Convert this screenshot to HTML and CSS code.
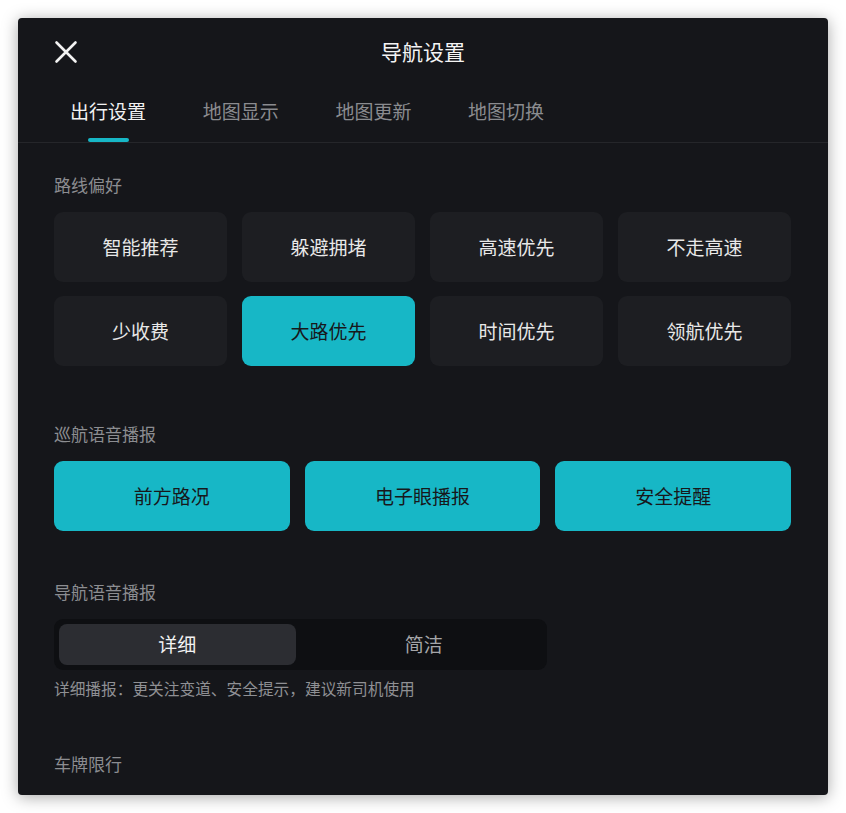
FILE: index.html
```html
<!DOCTYPE html>
<html lang="zh-CN">
<head>
    <meta charset="UTF-8">
    <meta name="viewport" content="width=device-width, initial-scale=1.0">
    <title>导航设置</title>
    <link rel="stylesheet" href="styles.css">
</head>
<body>
    <div class="panel">
        <div class="header">
            <button class="close" aria-label="关闭">
                <svg width="24" height="24" viewBox="0 0 24 24">
                    <path d="M2.5 2.5 L21.5 21.5 M21.5 2.5 L2.5 21.5" stroke="#f2f2f2" stroke-width="2.6" stroke-linecap="round" fill="none"/>
                </svg>
            </button>
            <h1 class="title">导航设置</h1>
            <span></span>
        </div>

        <div class="tabs">
            <div class="tab active"><span>出行设置</span><i class="tab-bar"></i></div>
            <div class="tab"><span>地图显示</span></div>
            <div class="tab"><span>地图更新</span></div>
            <div class="tab"><span>地图切换</span></div>
        </div>

        <div class="content">
            <div class="section">
                <div class="section-title">路线偏好</div>
                <div class="option-grid four">
                    <div class="option">智能推荐</div>
                    <div class="option">躲避拥堵</div>
                    <div class="option">高速优先</div>
                    <div class="option">不走高速</div>
                    <div class="option">少收费</div>
                    <div class="option selected">大路优先</div>
                    <div class="option">时间优先</div>
                    <div class="option">领航优先</div>
                </div>
            </div>

            <div class="section cruise">
                <div class="section-title">巡航语音播报</div>
                <div class="option-grid three">
                    <div class="option selected">前方路况</div>
                    <div class="option selected">电子眼播报</div>
                    <div class="option selected">安全提醒</div>
                </div>
            </div>

            <div class="section voice">
                <div class="section-title">导航语音播报</div>
                <div class="segment">
                    <div class="segment-item active">详细</div>
                    <div class="segment-item">简洁</div>
                </div>
                <p class="hint">详细播报：更关注变道、安全提示，建议新司机使用</p>
            </div>

            <div class="section plate">
                <div class="section-title">车牌限行</div>
            </div>
        </div>
    </div>
</body>
</html>
```

FILE: styles.css
```css
body {
    margin: 0;
    padding: 18px;
    background-color: #ffffff;
    font-family: "Noto Sans CJK SC", "Noto Sans", sans-serif;
}
.panel {
    width: 810px;
    height: 777px;
    overflow: hidden;
    background-color: #15161a;
    border-radius: 4px;
    box-shadow: 0 2px 16px rgba(0, 0, 0, 0.35);
    color: #ececec;
}
.header {
    display: grid;
    grid-template-columns: 1fr auto 1fr;
    align-items: center;
    height: 68px;
    padding: 0 36px;
}
.close {
    width: 24px;
    height: 24px;
    padding: 0;
    border: none;
    background: none;
    display: flex;
    cursor: pointer;
}
.title {
    margin: 0 0 2px;
    font-size: 21px;
    font-weight: 400;
    line-height: 28px;
    color: #f4f4f4;
}
.tabs {
    display: flex;
    gap: 56.7px;
    height: 56px;
    padding-left: 52px;
    border-bottom: 1px solid #25262a;
}
.tab {
    display: flex;
    flex-direction: column;
    align-items: center;
    padding-top: 11px;
    font-size: 19px;
    line-height: 28px;
    color: #8a8b8f;
}
.tab.active {
    color: #f2f2f2;
}
.tab-bar {
    display: block;
    width: 41px;
    height: 4px;
    margin-top: auto;
    border-radius: 2px;
    background-color: #17b7c6;
}
.content {
    padding: 30px 37px 0 36px;
}
.section-title {
    font-size: 17px;
    line-height: 24px;
    color: #8c8d91;
    margin-bottom: 15px;
}
.section.cruise {
    margin-top: 56px;
}
.section.voice {
    margin-top: 49px;
}
.section.plate {
    margin-top: 52px;
}
.option-grid {
    display: grid;
    gap: 14px 15px;
}
.option-grid.four {
    grid-template-columns: repeat(4, 1fr);
}
.option-grid.three {
    grid-template-columns: repeat(3, 1fr);
}
.option {
    height: 68px;
    padding-bottom: 2px;
    display: flex;
    align-items: center;
    justify-content: center;
    border-radius: 9px;
    background-color: #1d1e22;
    font-size: 19px;
    color: #e8e8e8;
}
.option.selected {
    background-color: #17b7c6;
    color: #17181b;
}
.segment {
    display: grid;
    grid-template-columns: 1fr 1fr;
    gap: 10px;
    width: 483px;
    height: 41px;
    padding: 5px;
    border-radius: 9px;
    background-color: #0e0f12;
}
.segment-item {
    display: flex;
    align-items: center;
    justify-content: center;
    padding-bottom: 2px;
    border-radius: 8px;
    font-size: 19px;
    color: #a5a6a9;
}
.segment-item.active {
    background-color: #2c2d32;
    color: #f2f2f2;
}
.hint {
    margin: 8px 0 0;
    font-size: 15.7px;
    line-height: 22px;
    color: #8f9094;
}
```
